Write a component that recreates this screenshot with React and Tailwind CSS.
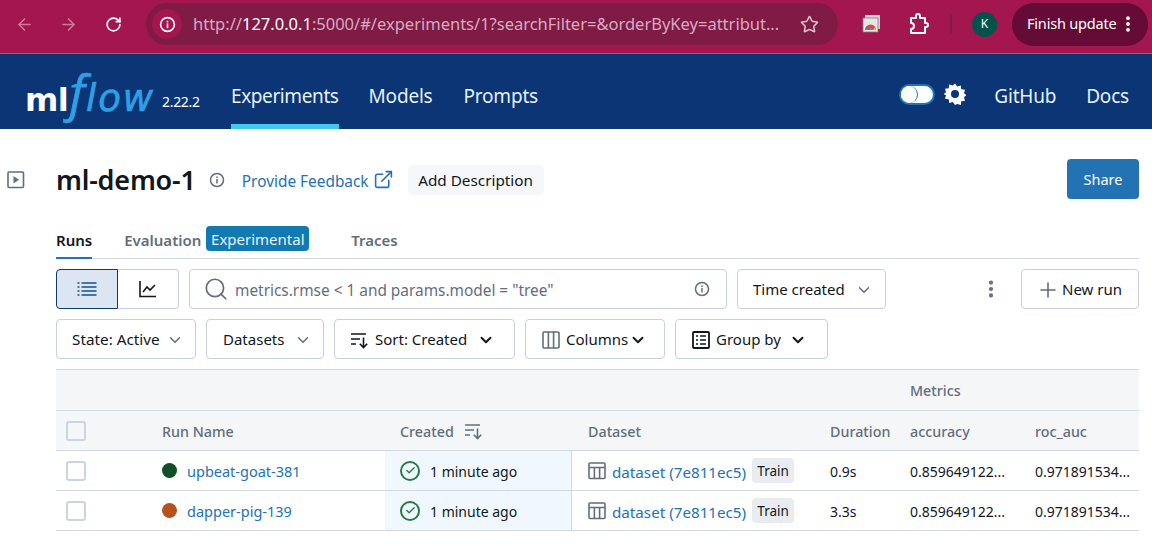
import React from "react";
import { ArrowLeft, ArrowRight, RotateCw, Star, ChevronDown, Plus, Search, ExternalLink, EllipsisVertical, Check } from "lucide-react";

const Info = ({ className = "", color = "#626e7b", size = 16 }) => (
  <svg width={size} height={size} viewBox="0 0 16 16" fill="none" className={className}>
    <circle cx="8" cy="8" r="6.5" stroke={color} strokeWidth="1.5" />
    <rect x="7.25" y="7" width="1.5" height="4.5" fill={color} />
    <rect x="7.25" y="4.5" width="1.5" height="1.5" fill={color} />
  </svg>
);

const SortIcon = ({ color = "#11171c" }) => (
  <svg width="20" height="18" viewBox="0 0 20 18" fill="none" stroke={color} strokeWidth="1.6">
    <path d="M1 3h15M1 8h9M1 13h5" />
    <path d="M13.5 6.5v10M9.8 12.8l3.7 3.7 3.7-3.7" />
  </svg>
);

const TableIcon = () => (
  <svg width="18" height="18" viewBox="0 0 18 18" fill="none" stroke="#626e7b" strokeWidth="1.6" className="shrink-0">
    <rect x="1" y="1" width="16" height="15.5" rx="1" />
    <path d="M1 5.5h16M6.4 5.5v11M11.6 5.5v11" />
  </svg>
);

const Caret = ({ dark }) => (
  <ChevronDown size={18} strokeWidth={dark ? 2.6 : 2} color={dark ? "#11171c" : "#626e7b"} />
);

const ToolButton = ({ children, className = "" }) => (
  <div className={`h-10 flex items-center border border-[#c6d1dc] rounded-[4px] bg-white pt-[1px] text-[15px] text-[#11171c] ${className}`}>
    {children}
  </div>
);

const Label = ({ children, className = "" }) => <span className={className}>{children}</span>;

const Checkbox = ({ header }) => (
  <div className={`w-[20px] h-[20px] rounded-[3px] border-2 border-[#c9d5e0] ${header ? "bg-[#f4f6f8]" : "bg-white"}`} />
);

const StatusOk = () => (
  <span className="w-[20px] h-[20px] rounded-full border-2 border-[#277c43] flex items-center justify-center shrink-0">
    <Check size={11} strokeWidth={3} color="#277c43" />
  </span>
);

const Row = ({ dot, name, duration }) => (
  <div className="grid grid-cols-[106px_223px_186px_259px_80px_125px_104px] h-10 border-b border-[#d1d9e1] text-[14px] text-[#11171c] items-stretch">
    <div className="flex items-center pl-[10px]"><Checkbox /></div>
    <div className="flex items-center">
      <span className="w-[15px] h-[15px] rounded-full mr-[10px] mb-[1px]" style={{ background: dot }} />
      <span className="text-[#2272b4] text-[14.5px] mt-[2px]">{name}</span>
    </div>
    <div className="flex items-center pl-[15px] gap-[10px] bg-[#f0f7fe] -mr-px">
      <StatusOk />
      <span className="mt-[2px]">1 minute ago</span>
    </div>
    <div className="flex items-center pl-[16px] border-l border-[#d1d9e1]">
      <TableIcon />
      <span className="text-[#2272b4] text-[15.2px] ml-[6px] mt-[3px] whitespace-nowrap">dataset (7e811ec5)</span>
      <span className="ml-[6px] h-[25px] w-[42px] justify-center pt-[2px] flex items-center rounded-[4px] bg-[#e8ecf0] text-[13.5px]">Train</span>
    </div>
    <div className="flex items-center pt-[2px]">{duration}</div>
    <div className="flex items-center pt-[2px]">0.859649122...</div>
    <div className="flex items-center pt-[2px]">0.971891534...</div>
  </div>
);

export default function App() {
  return (
    <div className="w-[1152px] h-[555px] overflow-hidden bg-white font-['Noto_Sans',sans-serif]">
      {/* browser chrome */}
      <div className="h-[54px] bg-[#a3164f] border-b border-[#c04a7a] flex items-center pb-[5px]">
        <div className="w-[146px] flex items-center pl-[15px] shrink-0">
          <ArrowLeft size={19} color="#d0799c" strokeWidth={2} />
          <ArrowRight size={19} color="#d0799c" strokeWidth={2} className="ml-[25px]" />
          <RotateCw size={17} color="#ffffff" strokeWidth={2.4} className="ml-[27px]" />
        </div>
        <div className="w-[692px] h-[42px] rounded-full bg-[#7f1b45] flex items-center pl-[6px] shrink-0">
          <span className="w-[30px] h-[30px] rounded-full bg-[#a3164f] flex items-center justify-center">
            <Info color="#ffffff" size={17} />
          </span>
          <span className="ml-[11px] text-[16.5px] text-[#dbaac0] whitespace-nowrap">
            http://<span className="text-white">127.0.0.1</span>:5000/#/experiments/1?searchFilter=&amp;orderByKey=attribut...
          </span>
          <Star size={19} color="#dbc2cd" strokeWidth={2} className="ml-auto mr-[19px]" />
        </div>
        <svg width="20" height="20" viewBox="0 0 20 20" className="ml-[24px] shrink-0">
          <rect x="3" y="1" width="15" height="14" fill="#cfd3d6" />
          <rect x="1" y="4" width="15" height="14" fill="#e6e6e6" stroke="#8a7a80" strokeWidth="0.8" />
          <path d="M3 16a5.5 5.5 0 0 1 11 0z" fill="#ea4335" />
          <path d="M6 16a2.5 2.5 0 0 1 5 0z" fill="#4285f4" />
          <path d="M11 16h3l-1-3z" fill="#fbbc05" />
          <path d="M3 16h3l-1-3z" fill="#34a853" />
        </svg>
        <svg width="22" height="22" viewBox="0 0 22 22" fill="none" stroke="#ffffff" strokeWidth="2" strokeLinejoin="round" className="ml-[25px] shrink-0">
          <path d="M4 5h5V3a2 2 0 0 1 4 0v2h5v5h1a1.8 1.8 0 0 1 0 4h-1v6H4v-4a3 3 0 0 0 0-6z" />
        </svg>
        <div className="w-[2px] h-[20px] bg-[#7f1b45] ml-[21px] shrink-0" />
        <div className="w-[25px] h-[25px] rounded-full bg-[#03524b] text-white text-[12px] flex items-center justify-center ml-[20px] shrink-0">K</div>
        <div className="w-[136px] h-[43px] rounded-full bg-[#640c35] ml-[15px] flex items-center pl-[15px] shrink-0">
          <span className="text-[14.5px] tracking-[-0.2px] text-white whitespace-nowrap">Finish update</span>
          <EllipsisVertical size={20} color="#ffffff" strokeWidth={2.6} className="ml-[2px]" />
        </div>
      </div>

      {/* mlflow header */}
      <div className="h-[75px] bg-[#0b3574] flex items-stretch pl-[25px] pr-[23px]">
        <div className="w-[206px] shrink-0 relative flex items-baseline pt-[13px]">
          <span className="font-['DejaVu_Sans',sans-serif] font-bold text-white text-[32px] leading-[50px] tracking-[-0.5px]">ml</span>
          <span className="font-['Open_Sans',sans-serif] italic text-[#2f9fe6] text-[50px] leading-[50px] ml-[1px] [-webkit-text-stroke:0.7px_#2f9fe6]">f</span>
          <span className="font-['DejaVu_Sans',sans-serif] italic text-[#2f9fe6] text-[37px] leading-[50px] tracking-[2px] ml-[1px] [-webkit-text-stroke:0.7px_#2f9fe6]">low</span>
          <span className="text-white text-[14px] tracking-[-0.3px] absolute left-[137px] top-[37px]">2.22.2</span>
        </div>
        <div className="relative flex items-center pt-[9px] text-[19px] tracking-[-0.4px] text-[#e6f1f5] mr-[30px]">
          Experiments
          <span className="absolute left-0 right-0 bottom-0 h-[5px] bg-[#43c9ed]" />
        </div>
        <div className="flex items-center pt-[9px] text-[19px] tracking-[-0.2px] text-[#e6f1f5] mr-[31px]">Models</div>
        <div className="flex items-center pt-[9px] text-[19px] tracking-[-0.2px] text-[#e6f1f5]">Prompts</div>
        <div className="ml-auto flex items-center pt-[5px]">
          <span className="w-[36px] h-[21px] rounded-full bg-white border-[2px] border-[#2272b4] relative">
            <span className="absolute left-0 top-0 w-[17px] h-[17px] rounded-full bg-white border-r border-[#2272b4]" />
          </span>
          <svg width="22" height="22" viewBox="0 0 22 22" className="ml-[9px]" fill="#ffffff">
            <path fillRule="evenodd" d="M11 0.5l2.2 3 3.6-1 .5 3.7 3.7.5-1 3.6 2.5 1.7-2.5 2.2 1 3.6-3.7.5-.5 3.7-3.6-1L11 22l-2.2-3-3.6 1-.5-3.7-3.7-.5 1-3.6L-.5 11l2.5-1.7-1-3.6 3.7-.5.5-3.7 3.6 1zM11 7a4 4 0 1 0 0 8 4 4 0 0 0 0-8z" />
          </svg>
          <span className="text-[19px] tracking-[-0.2px] text-[#e6f1f5] ml-[28px] mt-[4px]">GitHub</span>
          <span className="text-[19px] tracking-[-0.2px] text-[#e6f1f5] ml-[30px] mt-[4px]">Docs</span>
        </div>
      </div>

      {/* page */}
      <div className="flex">
        <div className="w-[56px] shrink-0 pl-[7px] pt-[42px]">
          <svg width="18" height="18" viewBox="0 0 18 18" fill="none">
            <rect x="1" y="1" width="15.5" height="15.5" rx="1" stroke="#626e7b" strokeWidth="1.6" />
            <path d="M6.5 5v7.5l5.5-3.75z" fill="#626e7b" />
          </svg>
        </div>
        <div className="w-[1083px] shrink-0">
          {/* title row */}
          <div className="h-[40px] mt-[30px] flex items-center">
            <span className="text-[27px] font-semibold tracking-[-0.2px] text-[#11171c] mt-[3px]">ml-demo-1</span>
            <Info className="ml-[13px] mt-[2px]" />
            <span className="ml-[17px] text-[15.4px] text-[#2272b4] mt-[5px]">Provide Feedback</span>
            <ExternalLink size={21} color="#2272b4" strokeWidth={1.8} className="ml-[4px]" />
            <span className="ml-[14px] mt-[2px] h-[30px] w-[136px] flex items-center justify-center pt-[1px] rounded-[4px] bg-[#f6f7f9] text-[15.3px] text-[#11171c]">Add Description</span>
            <span className="ml-auto h-[40px] w-[72px] flex items-center justify-center pt-[2px] rounded-[4px] bg-[#2272b4] text-white text-[14.5px]">Share</span>
          </div>

          {/* tabs */}
          <div className="h-[27px] mt-[33px] border-b border-[#d1d9e1] flex items-start text-[15px] leading-[17px] font-semibold">
            <span className="h-[27px] border-b-2 border-[#2272b4] text-[#11171c]">Runs</span>
            <span className="ml-[32px] text-[#626e7b]">Evaluation</span>
            <span className="ml-[5px] mt-[-6px] h-[25px] w-[103px] justify-center pt-[2px] rounded-[4px] bg-[#127ab0] text-[#e8f4fb] flex items-center font-normal">Experimental</span>
            <span className="ml-[42px] text-[#626e7b]">Traces</span>
          </div>

          {/* toolbar 1 */}
          <div className="flex items-center mt-[10px]">
            <div className="w-[62px] h-10 rounded-l-[4px] border border-[#0e3a6e] bg-[#dbe6f2] flex items-center justify-center">
              <svg width="20" height="16" viewBox="0 0 20 16" stroke="#0e538b" strokeWidth="1.5">
                <path d="M0.5 2h2M0.5 6h2M0.5 10h2M0.5 14h2M4.5 2h15M4.5 6h15M4.5 10h15M4.5 14h15" />
              </svg>
            </div>
            <div className="w-[61px] h-10 rounded-r-[4px] border border-l-0 border-[#c6d1dc] flex items-center justify-center">
              <svg width="18" height="18" viewBox="0 0 18 18" fill="none" stroke="#11171c" strokeWidth="1.6">
                <path d="M1 1v15.5h16" />
                <path d="M4 12l4-5 3 3 5-5" />
              </svg>
            </div>
            <div className="ml-[10px] w-[538px] h-10 rounded-[4px] border border-[#c6d1dc] flex items-center pl-[13px] pr-[16px]">
              <Search size={26} color="#626e7b" strokeWidth={1.6} />
              <span className="ml-[6px] mt-[3px] text-[15.4px] text-[#626e7b]">metrics.rmse &lt; 1 and params.model = "tree"</span>
              <Info className="ml-auto" />
            </div>
            <ToolButton className="ml-[10px] w-[149px] pl-[15px]">
              <Label>Time created</Label>
              <span className="ml-[10px]"><Caret /></span>
            </ToolButton>
            <EllipsisVertical size={22} color="#626e7b" strokeWidth={2.6} className="ml-[94px]" />
            <ToolButton className="ml-[19px] w-[118px] pl-[14px]">
              <Plus size={24} color="#626e7b" strokeWidth={1.6} />
              <Label className="ml-[2px]">New run</Label>
            </ToolButton>
          </div>

          {/* toolbar 2 */}
          <div className="flex items-center mt-[10px] gap-[10px]">
            <ToolButton className="w-[140px] pl-[15px]">
              <Label className="text-[15.3px]">State: Active</Label>
              <span className="ml-[6px]"><Caret /></span>
            </ToolButton>
            <ToolButton className="w-[118px] pl-[16px]">
              <Label>Datasets</Label>
              <span className="ml-[10px]"><Caret /></span>
            </ToolButton>
            <ToolButton className="w-[181px] pl-[15px]">
              <SortIcon />
              <Label className="ml-[5px]">Sort: Created</Label>
              <span className="ml-[10px]"><Caret dark /></span>
            </ToolButton>
            <ToolButton className="w-[140px] pl-[16px]">
              <svg width="18" height="18" viewBox="0 0 18 18" fill="none" stroke="#626e7b" strokeWidth="1.6">
                <rect x="1" y="1" width="16" height="16" rx="1" />
                <path d="M6.4 1v16M11.6 1v16" />
              </svg>
              <Label className="ml-[6px]">Columns</Label>
              <span className="ml-[1px]"><Caret dark /></span>
            </ToolButton>
            <ToolButton className="w-[153px] pl-[16px]">
              <svg width="18" height="18" viewBox="0 0 18 18" fill="none" stroke="#11171c" strokeWidth="1.8">
                <rect x="1" y="1" width="16" height="16" rx="1" />
                <path d="M4 5h2M4 9h2M4 13h2M8 5h6M8 9h6M8 13h6" strokeWidth="1.4" />
              </svg>
              <Label className="ml-[6px]">Group by</Label>
              <span className="ml-[8px]"><Caret dark /></span>
            </ToolButton>
          </div>

          {/* table */}
          <div className="mt-[10px] border-t border-[#d1d9e1]">
            <div className="h-[41px] bg-[#f4f6f8] border-b border-[#d1d9e1] flex items-center pt-[2px] pl-[854px] text-[14.3px] font-medium text-[#626e7b]">Metrics</div>
            <div className="grid grid-cols-[106px_223px_186px_259px_80px_125px_104px] h-10 bg-[#f4f6f8] border-b border-[#d1d9e1] text-[14.3px] font-medium text-[#626e7b] items-center">
              <div className="pl-[10px]"><Checkbox header /></div>
              <div className="pt-[2px]">Run Name</div>
              <div className="pl-[15px] flex items-center gap-[10px]">
                <span className="pt-[2px]">Created</span>
                <SortIcon color="#626e7b" />
              </div>
              <div className="pl-[17px] pt-[2px]">Dataset</div>
              <div className="pt-[2px]">Duration</div>
              <div className="pt-[2px]">accuracy</div>
              <div className="pt-[2px]">roc_auc</div>
            </div>
            <Row dot="#0f5026" name="upbeat-goat-381" duration="0.9s" />
            <Row dot="#bb4f1c" name="dapper-pig-139" duration="3.3s" />
          </div>
        </div>
      </div>
    </div>
  );
}
